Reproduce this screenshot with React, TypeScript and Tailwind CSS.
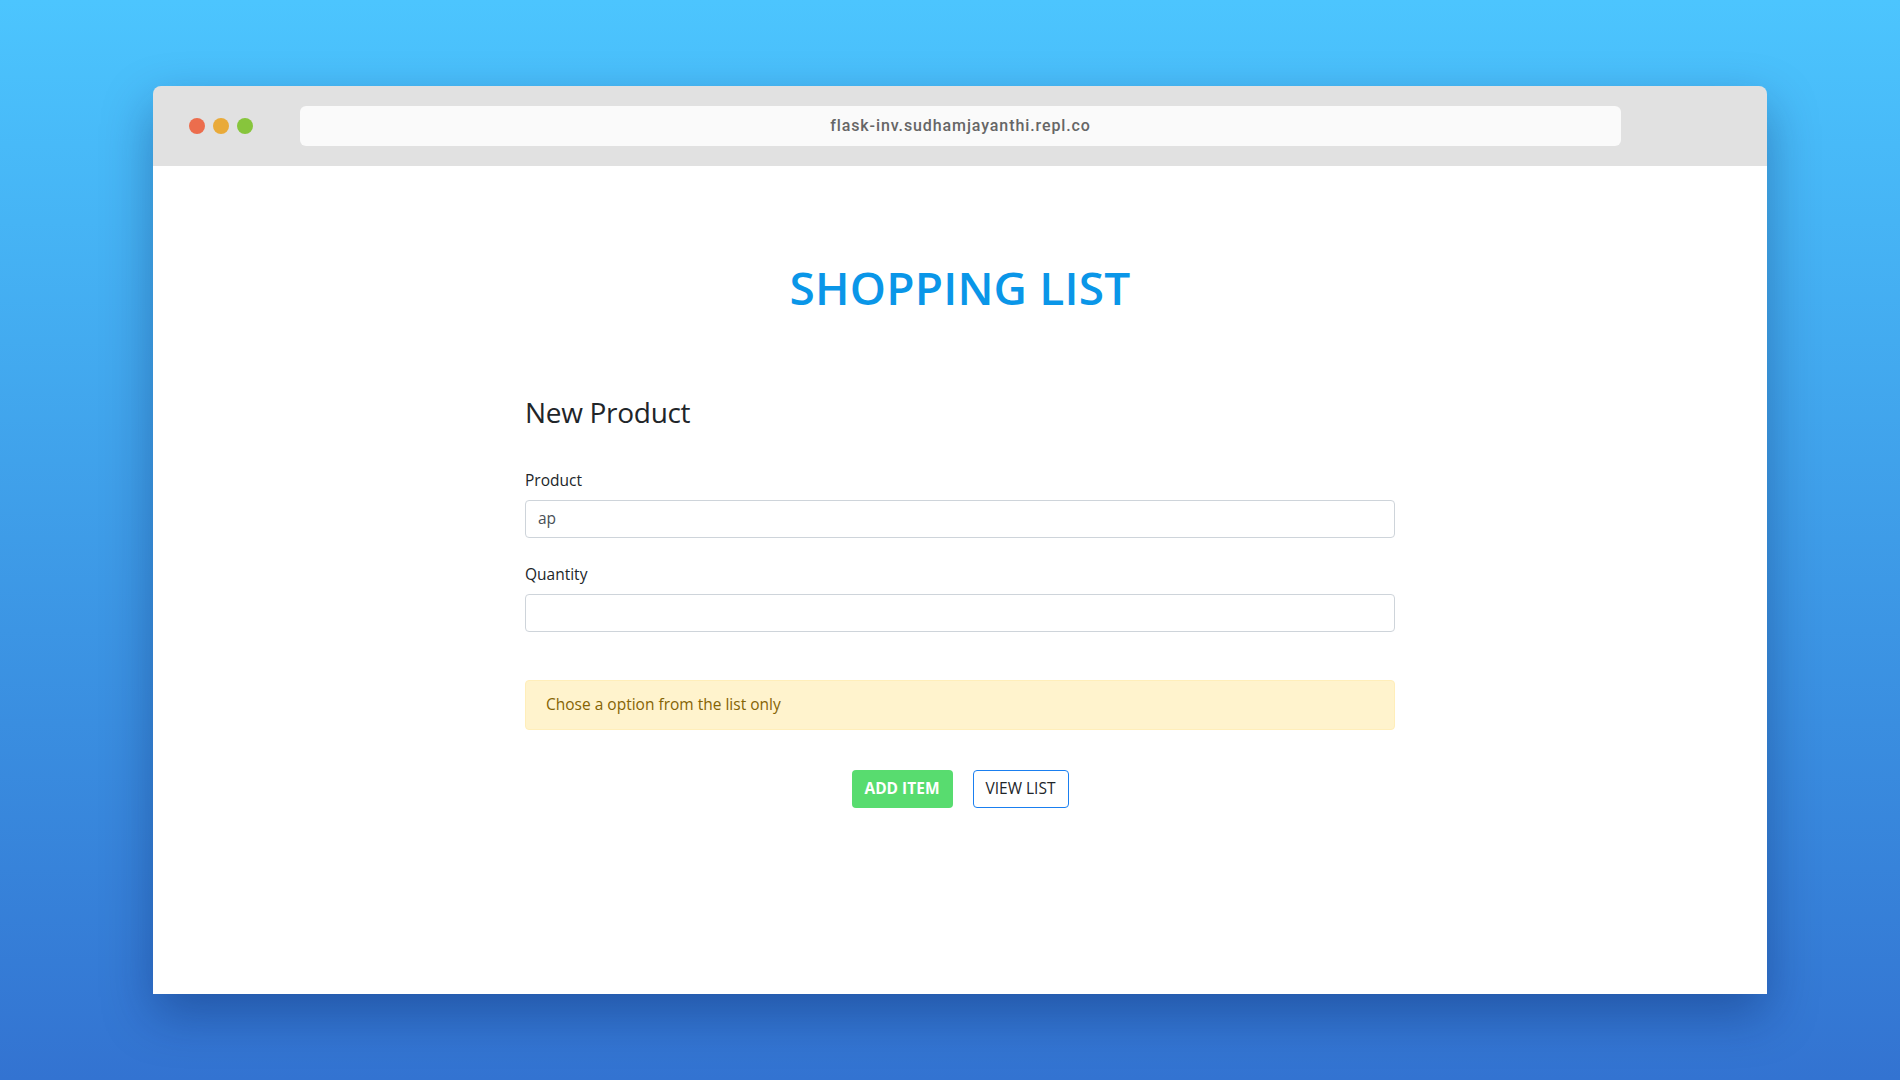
export default function App() {
  return (
    <div className="w-[1900px] h-[1080px] overflow-hidden bg-gradient-to-b from-[#4cc5fe] to-[#3373d1] pt-[86px]">
      {/* browser window */}
      <div className="ml-[153px] w-[1614px] h-[908px] flex flex-col rounded-t-lg overflow-hidden shadow-[0_20px_50px_rgba(0,20,80,0.35)]">
        <div className="h-[80px] bg-[#e1e1e1] flex items-center pl-[36px]">
          <div className="flex gap-2">
            <span className="w-4 h-4 rounded-full bg-[#ec6d4d]" />
            <span className="w-4 h-4 rounded-full bg-[#e9aa39]" />
            <span className="w-4 h-4 rounded-full bg-[#87c53c]" />
          </div>
          <div className="ml-[47px] w-[1321px] h-10 rounded-md bg-[#fafafa] flex items-center justify-center font-['Roboto',sans-serif] font-medium text-[16px] tracking-[0.9px] text-[#666666]">
            flask-inv.sudhamjayanthi.repl.co
          </div>
        </div>

        <div className="flex-1 bg-white font-['Open_Sans',sans-serif] text-[#212529]">
          <h1 className="mt-[93px] text-center text-[46px] leading-[56px] font-semibold text-[#0a96e8] tracking-[0.2px]">
            SHOPPING LIST
          </h1>

          <div className="w-[870px] mx-auto mt-[80px]">
            <h3 className="text-[28px] leading-[34px] tracking-[-0.3px]">New Product</h3>

            <label className="block mt-[39px] mb-2 text-[15.5px] leading-6">Product</label>
            <div className="h-[38px] border border-[#ced4da] rounded px-3 flex items-center text-[15.5px] text-[#495057]">
              ap
            </div>

            <label className="block mt-[24px] mb-2 text-[15.5px] leading-6">Quantity</label>
            <div className="h-[38px] border border-[#ced4da] rounded" />

            <div className="mt-[48px] h-[50px] border border-[#ffeeba] bg-[#fff3cd] rounded px-5 flex items-center text-[15.5px] text-[#856404]">
              Chose a option from the list only
            </div>

            <div className="mt-[40px] flex justify-center gap-5">
              <button className="w-[101px] h-[38px] rounded bg-[#58dc6f] text-white font-bold text-[15.5px]">
                ADD ITEM
              </button>
              <button className="w-[96px] h-[38px] rounded border border-[#1a7ff0] bg-white text-[#212529] text-[15.5px]">
                VIEW LIST
              </button>
            </div>
          </div>
        </div>
      </div>
    </div>
  );
}
